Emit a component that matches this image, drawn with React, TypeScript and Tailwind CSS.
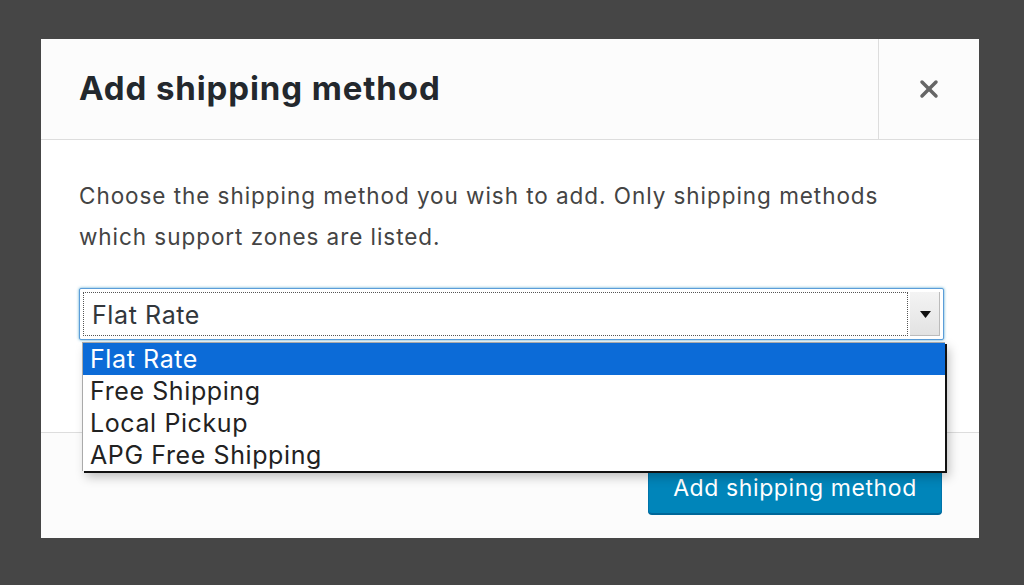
import { X } from 'lucide-react'

const options = ['Flat Rate', 'Free Shipping', 'Local Pickup', 'APG Free Shipping']

export default function App() {
  const font = { fontFamily: 'Inter, "Liberation Sans", sans-serif' }

  return (
    <div className="h-[585px] w-[1024px] bg-[#464646] pl-[41px] pt-[39px]" style={font}>
      <div className="flex h-[499px] w-[938px] flex-col bg-white">
        {/* Header */}
        <div className="flex h-[101px] shrink-0 border-b border-[#dddddd] bg-[#fcfcfc]">
          <h1 className="flex flex-1 items-center pl-[38px] text-[33px] font-bold tracking-[0.9px] text-[#23282d]">
            Add shipping method
          </h1>
          <button className="flex w-[101px] items-center justify-center border-l border-[#dddddd] text-[#666666]">
            <X size={28} strokeWidth={3} />
          </button>
        </div>

        {/* Body */}
        <div className="flex-1 px-[38px] pt-[35px]">
          <p className="text-[22.5px] leading-[41px] tracking-[0.95px] text-[#444444]">
            Choose the shipping method you wish to add. Only shipping methods which support zones are listed.
          </p>

          <div className="relative mt-[31px]">
            <div className="flex h-[52px] w-[865px] items-stretch rounded-[2px] border border-[#5b9dd9] bg-white p-[3px] shadow-[0_0_3px_rgba(30,140,190,0.8)]">
              <div className="flex flex-1 items-center border border-dotted border-[#555555] pl-[8px] pt-[3px] text-[25px] tracking-[0.6px] text-[#32373c]">
                Flat Rate
              </div>
              <div className="ml-[2px] flex w-[30px] items-center justify-center bg-gradient-to-b from-[#f4f4f4] to-[#e2e2e2] shadow-[inset_-1px_-1px_0_#bbbbbb]">
                <svg width="11" height="7" viewBox="0 0 11 7">
                  <path d="M0 0 L11 0 L5.5 7 Z" fill="#111111" />
                </svg>
              </div>
            </div>

            {/* Dropdown list */}
            <ul className="absolute left-[3px] top-[54px] z-10 w-[863px] border-l border-t border-[#aaaaaa] bg-white shadow-[2px_2px_0_#111111,4px_6px_10px_rgba(0,0,0,0.25)]">
              {options.map((o, i) => (
                <li
                  key={o}
                  className={`h-[32px] pl-[7px] text-[25px] leading-[33px] tracking-[0.6px] ${
                    i === 0 ? 'bg-[#0c6bd7] text-white' : 'text-[#222222]'
                  }`}
                >
                  {o}
                </li>
              ))}
            </ul>
          </div>
        </div>

        {/* Footer */}
        <div className="flex h-[106px] shrink-0 justify-end border-t border-[#dddddd] bg-[#fcfcfc] pr-[37px] pt-[35px]">
          <button className="h-[46px] w-[294px] rounded-[4px] border border-[#0073aa] border-b-[#006799] bg-[#0085ba] pb-[5px] text-[23px] tracking-[0.6px] text-white shadow-[0_1px_0_#006799]">
            Add shipping method
          </button>
        </div>
      </div>
    </div>
  )
}
